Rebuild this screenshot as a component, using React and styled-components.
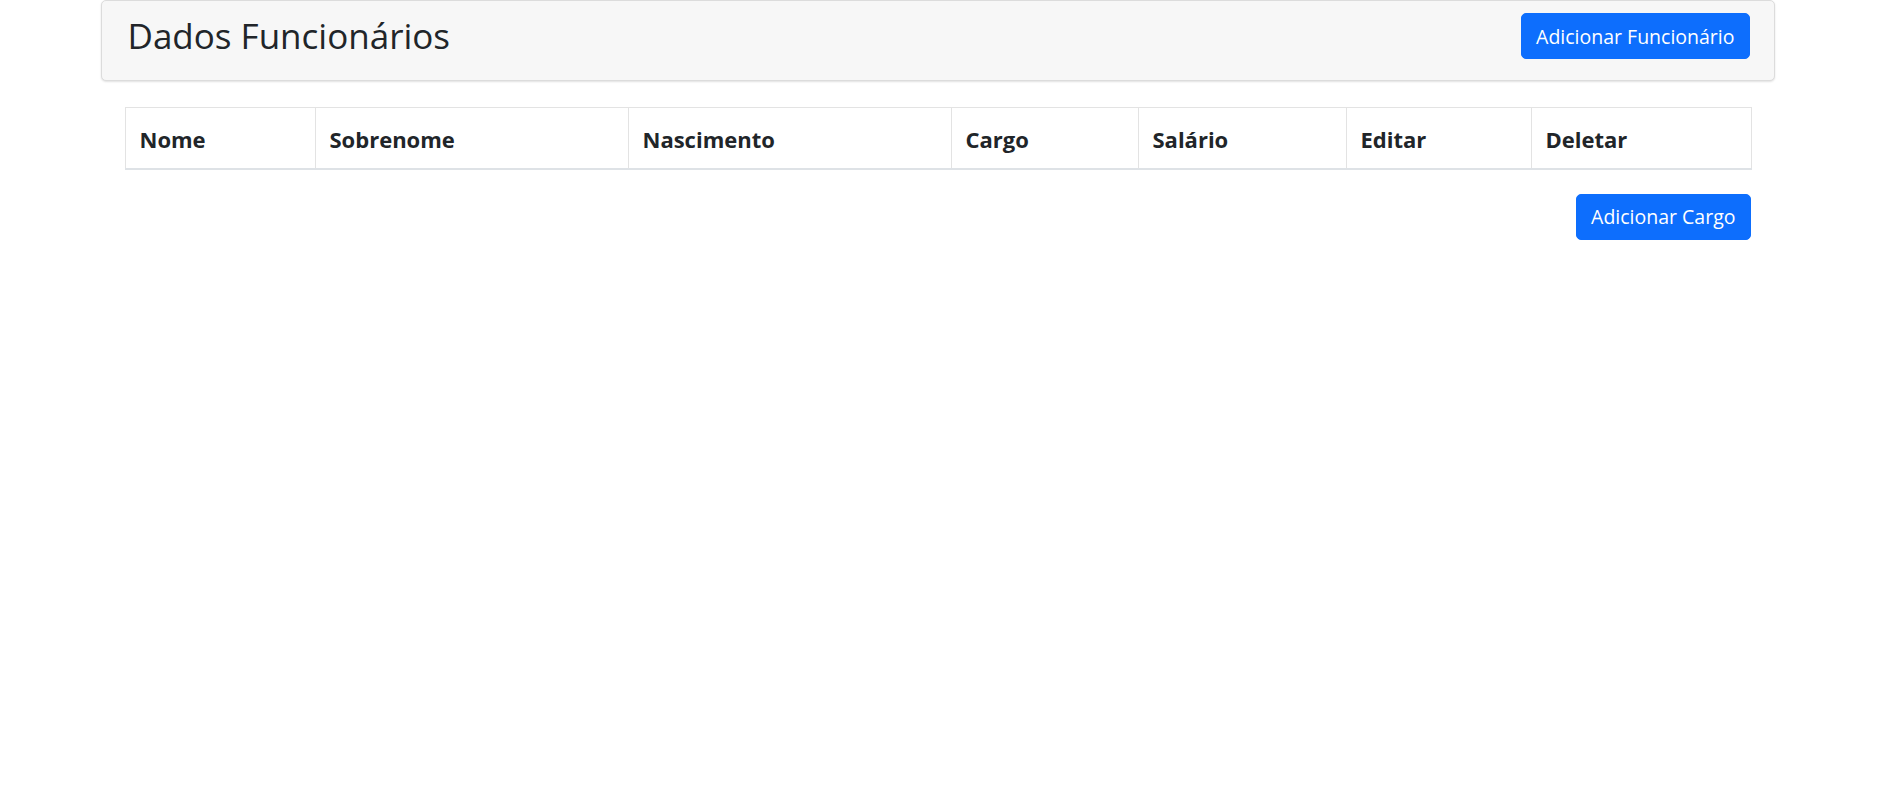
import React from "react";
import styled, { createGlobalStyle } from "styled-components";

const GlobalStyle = createGlobalStyle`
  body {
    margin: 0;
    background: #fff;
    color: #212529;
    font-family: "Open Sans", "Noto Sans", Arial, sans-serif;
  }
`;

const columns = [
  { label: "Nome", width: 190 },
  { label: "Sobrenome", width: 313 },
  { label: "Nascimento", width: 323 },
  { label: "Cargo", width: 187 },
  { label: "Salário", width: 208 },
  { label: "Editar", width: 185 },
  { label: "Deletar", width: 220 },
];

const App = () => {
  return (
    <Page>
      <GlobalStyle />
      <Container>
        <HeaderCard>
          <Title>Dados Funcionários</Title>
          <Button>Adicionar Funcionário</Button>
        </HeaderCard>
        <Content>
          <Table>
            <colgroup>
              {columns.map((c) => (
                <col key={c.label} style={{ width: c.width }} />
              ))}
            </colgroup>
            <thead>
              <tr>
                {columns.map((c) => (
                  <Th key={c.label}>{c.label}</Th>
                ))}
              </tr>
            </thead>
            <tbody></tbody>
          </Table>
          <Actions>
            <Button>Adicionar Cargo</Button>
          </Actions>
        </Content>
      </Container>
    </Page>
  );
};

const Page = styled.div`
  padding-right: 17px;
`;

const Container = styled.div`
  width: 1674px;
  margin: 0 auto;
`;

const HeaderCard = styled.div`
  display: flex;
  justify-content: space-between;
  align-items: flex-start;
  height: 81px;
  box-sizing: border-box;
  padding: 12px 24px 0 26px;
  background-color: #f7f7f7;
  border: 1px solid #dcdcdc;
  border-radius: 5px;
  box-shadow: 0 1px 2px rgba(0, 0, 0, 0.12);
`;

const Title = styled.h2`
  margin: 0;
  font-size: 35px;
  font-weight: 400;
  line-height: 46px;
  color: #212529;
`;

const Button = styled.button`
  height: 46px;
  padding: 0 14px;
  font-family: inherit;
  font-size: 19.5px;
  font-weight: 400;
  color: #fff;
  background-color: #0d6efd;
  border: 1px solid #0d6efd;
  border-radius: 5px;
  cursor: pointer;
`;

const Content = styled.div`
  padding: 0 24px;
`;

const Table = styled.table`
  width: 100%;
  margin-top: 26px;
  table-layout: fixed;
  border-collapse: collapse;
  border: 1px solid #dee2e6;
`;

const Th = styled.th`
  height: 61px;
  padding: 3px 14px 0;
  box-sizing: border-box;
  text-align: left;
  font-size: 22px;
  font-weight: 700;
  color: #212529;
  border: 1px solid #e3e3e3;
  border-bottom: 2px solid #dee2e6;
`;

const Actions = styled.div`
  display: flex;
  justify-content: flex-end;
  margin-top: 24px;
`;

export default App;
